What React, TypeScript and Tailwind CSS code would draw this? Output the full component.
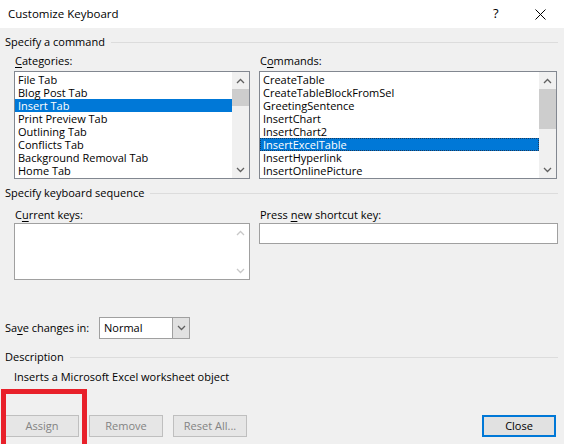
import React from "react"

const categories = [
  "File Tab",
  "Blog Post Tab",
  "Insert Tab",
  "Print Preview Tab",
  "Outlining Tab",
  "Conflicts Tab",
  "Background Removal Tab",
  "Home Tab",
]

const commands = [
  "CreateTable",
  "CreateTableBlockFromSel",
  "GreetingSentence",
  "InsertChart",
  "InsertChart2",
  "InsertExcelTable",
  "InsertHyperlink",
  "InsertOnlinePicture",
]

function Chevron({ up, color = "#606060" }: { up?: boolean; color?: string }) {
  return (
    <svg width="9" height="6" viewBox="0 0 9 6">
      <path
        d={up ? "M1 5 L4.5 1.5 L8 5" : "M1 1 L4.5 4.5 L8 1"}
        fill="none"
        stroke={color}
        strokeWidth="1.3"
      />
    </svg>
  )
}

function ScrollBar({
  thumbHeight,
  disabled,
}: {
  thumbHeight?: number
  disabled?: boolean
}) {
  const color = disabled ? "#c8c8c8" : "#606060"
  return (
    <div className={`flex flex-col w-[17px] ${disabled ? "bg-white" : "bg-[#f0f0f0]"}`}>
      <div className="h-[17px] flex items-center justify-center">
        <Chevron up color={color} />
      </div>
      <div className="flex-1">
        {thumbHeight ? <div className="bg-[#cdcdcd]" style={{ height: thumbHeight }} /> : null}
      </div>
      <div className="h-[17px] flex items-center justify-center">
        <Chevron color={color} />
      </div>
    </div>
  )
}

function ListBox({
  items,
  selected,
  focused,
  width,
  thumbHeight,
}: {
  items: string[]
  selected: number
  focused?: boolean
  width: string
  thumbHeight: number
}) {
  return (
    <div className={`${width} h-[108px] border border-[#828790] bg-white flex`}>
      <div className="flex-1 pt-[1px]">
        {items.map((it, i) => (
          <div
            key={it}
            className={`h-[13px] leading-[13px] pl-[3px] whitespace-nowrap ${
              i === selected
                ? focused
                  ? "bg-[#0078d7] text-white outline outline-1 outline-dotted outline-[#1b3a5c] -outline-offset-1"
                  : "bg-[#0078d7] text-white"
                : ""
            }`}
          >
            {it}
          </div>
        ))}
      </div>
      <ScrollBar thumbHeight={thumbHeight} />
    </div>
  )
}

function SectionHeader({ title }: { title: string }) {
  return (
    <div className="h-[16px] flex items-center">
      <span className="leading-[16px]">{title}</span>
      <div className="flex-1 h-px bg-[#dcdcdc] ml-[6px]" />
    </div>
  )
}

function Btn({ label, disabled, primary }: { label: string; disabled?: boolean; primary?: boolean }) {
  return (
    <div
      className={`w-[74px] h-[22px] flex items-center justify-center ${
        primary
          ? "border-2 border-[#0078d7] text-black bg-[#e1e1e1]"
          : disabled
          ? "border border-[#bfbfbf] text-[#838383] bg-[#e6e6e6]"
          : "border border-[#adadad] text-black bg-[#e1e1e1]"
      }`}
    >
      {label}
    </div>
  )
}

export default function App() {
  return (
    <div className="relative w-[564px] h-[444px] overflow-hidden bg-[#f0f0f0] text-[11px] text-black font-['Open_Sans',sans-serif] flex flex-col">
      {/* title bar */}
      <div className="h-[28px] bg-white flex items-center pl-[8px] shrink-0">
        <span className="flex-1 text-[11.5px]">Customize Keyboard</span>
        <span className="w-[10px] text-[13px] mr-[32px]">?</span>
        <svg width="11" height="11" viewBox="0 0 11 11" className="mr-[18px]">
          <path d="M0.5 0.5 L10.5 10.5 M10.5 0.5 L0.5 10.5" stroke="#000" strokeWidth="1" />
        </svg>
      </div>

      <div className="flex flex-col pl-[5px] pr-[6px]">
        <div className="mt-[6px]">
          <SectionHeader title="Specify a command" />
        </div>

        <div className="flex pl-[9px] mt-[3px] gap-[9px]">
          <div className="flex flex-col">
            <div className="h-[16px] leading-[16px] pl-[1px] mb-[2px]">
              <span className="underline underline-offset-2">C</span>ategories:
            </div>
            <ListBox items={categories} selected={2} width="w-[236px]" thumbHeight={17} />
          </div>
          <div className="flex flex-col">
            <div className="h-[16px] leading-[16px] pl-[1px] mb-[2px]">
              C<span className="underline underline-offset-2">o</span>mmands:
            </div>
            <ListBox items={commands} selected={5} focused width="w-[298px]" thumbHeight={40} />
          </div>
        </div>

        <div className="mt-[6px]">
          <SectionHeader title="Specify keyboard sequence" />
        </div>

        <div className="flex pl-[9px] mt-[6px] gap-[9px]">
          <div className="flex flex-col">
            <div className="h-[16px] leading-[16px] pl-[1px]">
              C<span className="underline underline-offset-2">u</span>rrent keys:
            </div>
            <div className="w-[236px] h-[57px] border border-[#a0a0a0] bg-white flex justify-end">
              <ScrollBar disabled />
            </div>
          </div>
          <div className="flex flex-col">
            <div className="h-[16px] leading-[16px] pl-[1px]">
              Press <span className="underline underline-offset-2">n</span>ew shortcut key:
            </div>
            <div className="w-[299px] h-[21px] border border-[#a0a0a0] bg-white" />
          </div>
        </div>

        <div className="flex items-center mt-[37px]">
          <span className="w-[94px]">
            Sa<span className="underline underline-offset-2">v</span>e changes in:
          </span>
          <div className="w-[91px] h-[22px] border border-[#a0a0a0] bg-white flex">
            <span className="flex-1 pl-[4px] leading-[20px]">Normal</span>
            <div className="w-[17px] bg-[#e1e1e1] border-l border-[#a0a0a0] flex items-center justify-center">
              <Chevron color="#606060" />
            </div>
          </div>
        </div>

        <div className="mt-[10px]">
          <SectionHeader title="Description" />
        </div>
        <div className="mt-[4px] pl-[9px] h-[16px] leading-[16px]">
          Inserts a Microsoft Excel worksheet object
        </div>

        <div className="flex mt-[30px]">
          <div className="flex gap-[10px]">
            <Btn label="Assign" disabled />
            <Btn label="Remove" disabled />
            <Btn label="Reset All..." disabled />
          </div>
          <div className="flex-1" />
          <div className="mr-[2px]">
            <Btn label="Close" primary />
          </div>
        </div>
      </div>

      {/* red annotation box */}
      <div className="absolute left-[1px] top-[389px] w-[86px] h-[70px] border-[5px] border-[#e8202a]" />
    </div>
  )
}
